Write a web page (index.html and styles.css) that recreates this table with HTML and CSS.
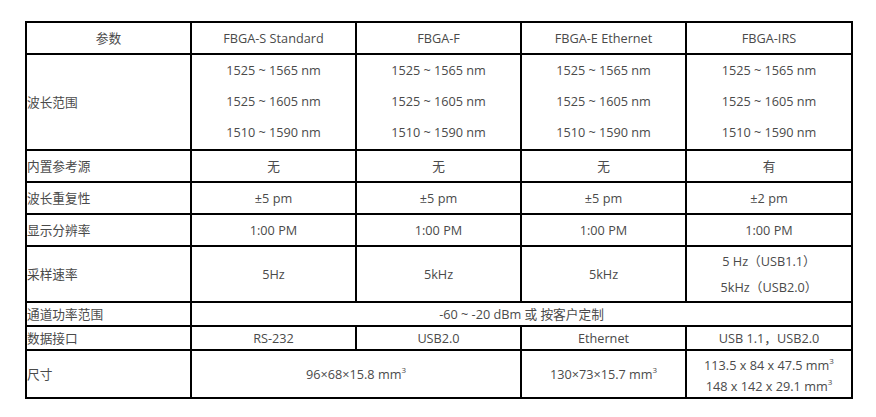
FILE: index.html
```html
<!DOCTYPE html>
<html lang="zh-CN">
<head>
<meta charset="utf-8">
<title>FBGA 参数</title>
<link rel="stylesheet" href="styles.css">
</head>
<body>
<table class="spec">
  <colgroup>
    <col class="c-first">
    <col class="c-mid">
    <col class="c-mid">
    <col class="c-mid">
    <col class="c-last">
  </colgroup>
  <tr class="r-head">
    <td class="lbl center">参数</td>
    <td>FBGA-S Standard</td>
    <td>FBGA-F</td>
    <td>FBGA-E Ethernet</td>
    <td>FBGA-IRS</td>
  </tr>
  <tr class="r-wave">
    <td class="lbl">波长范围</td>
    <td><div class="l3">1525 ~ 1565 nm</div><div class="l3">1525 ~ 1605 nm</div><div class="l3">1510 ~ 1590 nm</div></td>
    <td><div class="l3">1525 ~ 1565 nm</div><div class="l3">1525 ~ 1605 nm</div><div class="l3">1510 ~ 1590 nm</div></td>
    <td><div class="l3">1525 ~ 1565 nm</div><div class="l3">1525 ~ 1605 nm</div><div class="l3">1510 ~ 1590 nm</div></td>
    <td><div class="l3">1525 ~ 1565 nm</div><div class="l3">1525 ~ 1605 nm</div><div class="l3">1510 ~ 1590 nm</div></td>
  </tr>
  <tr class="r-std">
    <td class="lbl">内置参考源</td>
    <td>无</td>
    <td>无</td>
    <td>无</td>
    <td>有</td>
  </tr>
  <tr class="r-std">
    <td class="lbl">波长重复性</td>
    <td>±5 pm</td>
    <td>±5 pm</td>
    <td>±5 pm</td>
    <td>±2 pm</td>
  </tr>
  <tr class="r-std">
    <td class="lbl">显示分辨率</td>
    <td>1:00 PM</td>
    <td>1:00 PM</td>
    <td>1:00 PM</td>
    <td>1:00 PM</td>
  </tr>
  <tr class="r-rate">
    <td class="lbl">采样速率</td>
    <td>5Hz</td>
    <td>5kHz</td>
    <td>5kHz</td>
    <td class="two"><div class="l2">5 Hz（USB1.1）</div><div class="l2">5kHz（USB2.0）</div></td>
  </tr>
  <tr class="r-thin">
    <td class="lbl">通道功率范围</td>
    <td colspan="4">-60 ~ -20 dBm 或 按客户定制</td>
  </tr>
  <tr class="r-thin">
    <td class="lbl">数据接口</td>
    <td>RS-232</td>
    <td>USB2.0</td>
    <td>Ethernet</td>
    <td>USB 1.1，USB2.0</td>
  </tr>
  <tr class="r-size">
    <td class="lbl">尺寸</td>
    <td colspan="2">96×68×15.8 mm<sup>3</sup></td>
    <td>130×73×15.7 mm<sup>3</sup></td>
    <td class="two"><div class="ls">113.5 x 84 x 47.5 mm<sup>3</sup></div><div class="ls">148 x 142 x 29.1 mm<sup>3</sup></div></td>
  </tr>
</table>
</body>
</html>
```

FILE: styles.css
```css
html, body {
  margin: 0;
  padding: 0;
  background: #ffffff;
}

body {
  font-family: "Open Sans", "Noto Sans CJK SC", sans-serif;
  font-size: 12.7px;
  color: #4a4a4a;
}

.spec {
  margin: 21px 0 0 25px;
  width: 828px;
  table-layout: fixed;
  border-collapse: separate;
  border-spacing: 0;
}

.c-first { width: 167px; }
.c-mid { width: 165px; }
.c-last { width: 166px; }

.spec td {
  padding: 0;
  border-right: 2px solid #000;
  border-bottom: 2px solid #000;
  text-align: center;
  vertical-align: middle;
  white-space: nowrap;
}

.spec td.lbl {
  border-left: 2px solid #000;
  text-align: left;
}

.spec td.lbl.center {
  text-align: center;
}

.r-head td {
  border-top: 2px solid #000;
  line-height: 30px;
}

.r-wave td {
  line-height: 30px;
}

.r-wave .l3 {
  line-height: 31px;
}

.r-wave td:not(.lbl) {
  padding-bottom: 1px;
}

.r-std td {
  line-height: 30px;
}

.r-rate td {
  line-height: 54px;
}

.r-rate td.two {
  line-height: 26px;
  padding: 1px 0;
}

.r-thin td {
  line-height: 22px;
}

.r-size td {
  line-height: 46px;
}

.r-size td.two {
  line-height: 21px;
  padding-top: 4px;
}

.spec sup {
  font-size: 8px;
  line-height: 0;
  vertical-align: 6px;
}
```
